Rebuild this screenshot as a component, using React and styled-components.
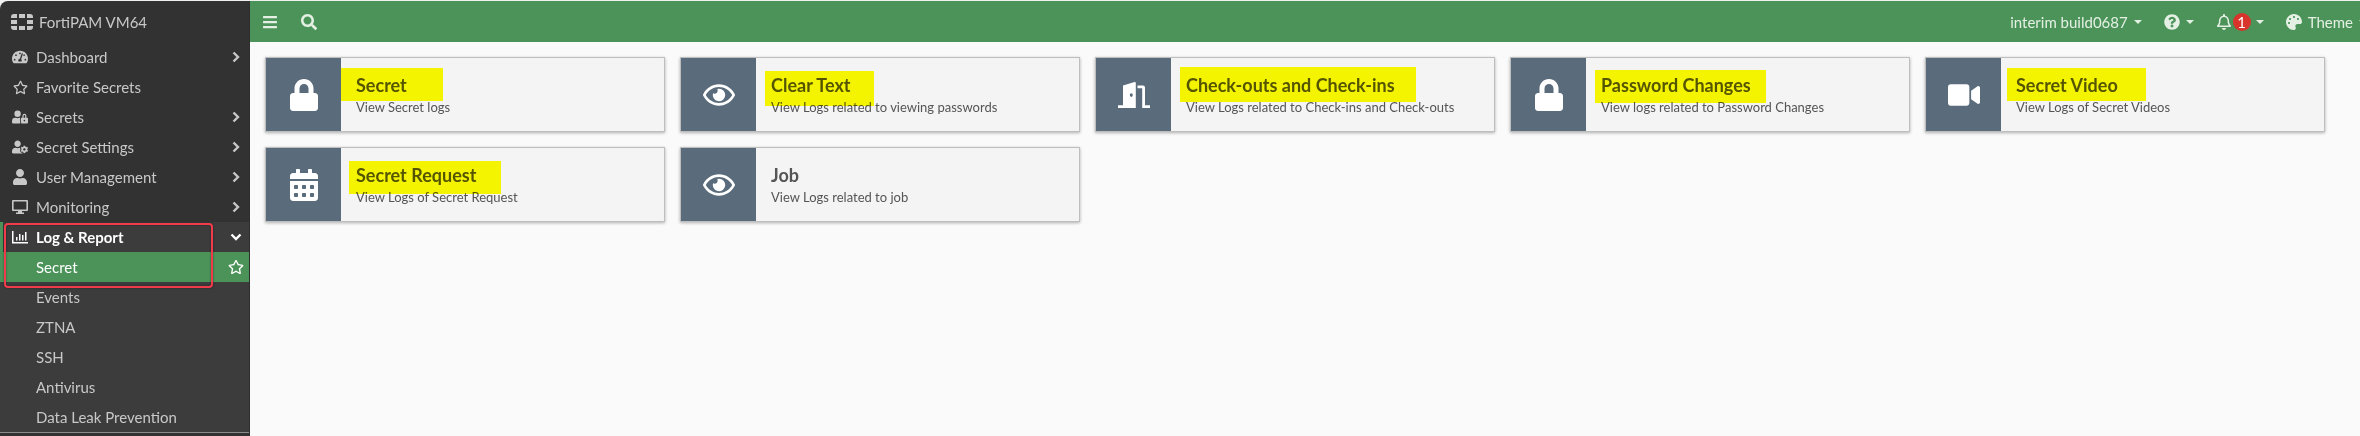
import React from "react";
import styled, { createGlobalStyle, css } from "styled-components";
import {
  FaBars,
  FaSearch,
  FaQuestionCircle,
  FaRegBell,
  FaPalette,
  FaTachometerAlt,
  FaRegStar,
  FaUserLock,
  FaUserCog,
  FaUser,
  FaLock,
  FaRegEye,
  FaVideo,
  FaCalendarAlt,
} from "react-icons/fa";

const color = {
  green: "#4b9359",
  side: "#323232",
  sideOpen: "#3c3c3c",
  sideText: "#c8c8c8",
  headText: "#e4f0e4",
  slate: "#5a6b7b",
  text: "#555555",
};

const GlobalStyle = createGlobalStyle`
  *, *::before, *::after { box-sizing: border-box; }
  body {
    margin: 0;
    background: #f0f2f0;
    font-family: Lato, "Liberation Sans", sans-serif;
    font-size: 15px;
    line-height: 20px;
  }
  button { font: inherit; color: inherit; background: none; border: 0; margin: 0; cursor: pointer; }
  a { color: inherit; text-decoration: none; }
  ul { list-style: none; margin: 0; padding: 0; }
  svg { display: block; flex: none; }
`;

/* Page frame */

const Shell = styled.div`
  display: flex;
  min-height: 100vh;
  padding-top: 1px;
`;

const Sidebar = styled.aside`
  flex: none;
  width: 250px;
  background: ${color.side};
  color: ${color.sideText};
  border-right: 1px solid #2e2e2e;
  border-top-left-radius: 8px;
`;

const Content = styled.div`
  flex: 1;
  min-width: 0;
  display: flex;
  flex-direction: column;
  background: #fafafa;
`;

/* Sidebar */

const Brand = styled.div`
  display: flex;
  align-items: center;
  gap: 6px;
  height: 41px;
  padding: 0 11px;
`;

const entry = css`
  display: flex;
  align-items: center;
  gap: 8px;
  width: 100%;
  height: 30px;
  padding: 0 6px 0 12px;
  text-align: left;
`;

const NavButton = styled.button`
  ${entry}
`;

const NavLink = styled.a`
  ${entry}
`;

const NavIcon = styled.span`
  display: flex;
  justify-content: center;
  width: 16px;
`;

const NavLabel = styled.span`
  flex: 1;
`;

const OpenGroup = styled.li`
  position: relative;
  background: ${color.sideOpen};
  border-bottom: 1px solid #8a8a8a;

  & > ${NavButton} {
    border-left: 3px solid ${color.green};
    padding-left: 9px;
    color: #ffffff;
    font-weight: 700;
  }
`;

const SubItem = styled.li`
  display: flex;
  align-items: center;
  height: 30px;
  padding: 0 5px 0 36px;
  background: ${(p) => (p.$active ? color.green : "transparent")};
  color: ${(p) => (p.$active ? "#ffffff" : "inherit")};

  a { flex: 1; }
`;

const StarButton = styled.button`
  padding: 0;
`;

const Callout = styled.span`
  position: absolute;
  top: 1px;
  left: 4px;
  width: 209px;
  height: 65px;
  border: 2px solid #f03b4b;
  border-radius: 4px;
  box-shadow: 0 0 2px rgba(0, 0, 0, 0.5), inset 0 0 2px rgba(0, 0, 0, 0.5);
  pointer-events: none;
`;

/* Header */

const Header = styled.header`
  display: flex;
  align-items: center;
  justify-content: space-between;
  height: 41px;
  overflow: hidden;
  padding-left: 1px;
  background: ${color.green};
  color: ${color.headText};
`;

const HeaderGroup = styled.div`
  display: flex;
  gap: ${(p) => (p.$bleed ? 0 : 1)}px;
  height: 100%;
  ${(p) => p.$bleed && "margin-right: -18px;"}
`;

const HeaderButton = styled.button`
  display: flex;
  align-items: center;
  gap: ${(p) => p.$gap || 6}px;
  height: 100%;
  padding: 0 11px;
`;

const Badge = styled.span`
  width: 18px;
  height: 18px;
  margin-right: 4px;
  border-radius: 50%;
  background: #d9342b;
  color: #ffffff;
  line-height: 18px;
  text-align: center;
`;

const Caret = styled.span`
  border: solid transparent;
  border-width: 4px 4px 0;
  border-top-color: currentColor;
`;

/* Cards */

const CardGrid = styled.main`
  display: grid;
  grid-template-columns: repeat(auto-fill, 400px);
  gap: 15px;
  padding: 15px;
`;

const Card = styled.a`
  display: flex;
  height: 75px;
  background: #f4f4f4;
  border: 1px solid #bebebe;
  box-shadow: 0 1px 3px rgba(0, 0, 0, 0.3);
  color: ${color.text};
`;

const CardIcon = styled.span`
  display: flex;
  align-items: center;
  justify-content: center;
  width: 75px;
  background: ${color.slate};
  color: #ffffff;
`;

const CardBody = styled.span`
  position: relative;
  flex: 1;
  display: flex;
  flex-direction: column;
  padding: 15px 15px 0;
`;

const CardTitle = styled.strong`
  font-size: 18px;
  font-weight: 700;
  line-height: 24px;
`;

const CardNote = styled.span`
  font-size: 13px;
  line-height: 20px;
`;

const Marker = styled.span`
  position: absolute;
  left: ${(p) => p.$box[0]}px;
  top: ${(p) => p.$box[1]}px;
  width: ${(p) => p.$box[2]}px;
  height: ${(p) => p.$box[3]}px;
  background: #ffff00;
  mix-blend-mode: multiply;
  pointer-events: none;
`;

/* Drawings */

const Logo = () => (
  <svg width="22" height="16" viewBox="0 0 22 16" fill="currentColor" aria-hidden="true">
    <path d="M3 0h3v4H0V3a3 3 0 0 1 3-3zM8 0h6v4H8zM16 0h3a3 3 0 0 1 3 3v1h-6zM0 6h6v4H0zM16 6h6v4h-6zM0 12h6v4H3a3 3 0 0 1-3-3zM8 12h6v4H8zM16 12h6v1a3 3 0 0 1-3 3h-3z" />
  </svg>
);

const Monitor = () => (
  <svg width="16" height="14" viewBox="0 0 16 14" fill="currentColor" aria-hidden="true">
    <path fillRule="evenodd" d="M1 0h14a1 1 0 0 1 1 1v9a1 1 0 0 1-1 1h-5v1.500h2V14H4v-1.500h2V11H1a1 1 0 0 1-1-1V1a1 1 0 0 1 1-1zm.6 1.600v7.800h12.800V1.600z" />
  </svg>
);

const Bars = () => (
  <svg width="16" height="13" viewBox="0 0 16 13" fill="currentColor" aria-hidden="true">
    <path d="M0 0h1.500v11H16v1.500H0zM4 6h1.500v3.500H4zM7 3h1.500v6.500H7zM10 4h1.500v5.500H10zM13 1h1.500v8.500H13z" />
  </svg>
);

const Chevron = ({ down }) => (
  <svg width="14" height="14" viewBox="0 0 14 14" fill="none" stroke="currentColor" strokeWidth="2.400" aria-hidden="true">
    <path d={down ? "M2.500 4.500 7 9l4.500-4.500" : "M4.500 2.500 9 7l-4.500 4.500"} />
  </svg>
);

const Door = () => (
  <svg width="32" height="26" viewBox="0 0 32 26" fill="currentColor" aria-hidden="true">
    <path fillRule="evenodd" d="M5 3.500 16.500.1q1.300-.3 1.300 1V26H0v-2.800h5zM13.300 11.300a1.500 1.800 0 1 0 0 3.600 1.500 1.800 0 0 0 0-3.600z" />
    <path d="M19.500 3.500H25a2 2 0 0 1 2 2v17.700h5V26h-7.800V6.300h-4.700z" />
  </svg>
);

const navItems = [
  { label: "Dashboard", icon: <FaTachometerAlt size={16} />, opens: true },
  { label: "Favorite Secrets", icon: <FaRegStar size={15} /> },
  { label: "Secrets", icon: <FaUserLock size={16} />, opens: true },
  { label: "Secret Settings", icon: <FaUserCog size={16} />, opens: true },
  { label: "User Management", icon: <FaUser size={16} />, opens: true },
  { label: "Monitoring", icon: <Monitor />, opens: true },
];

const reportItems = ["Secret", "Events", "ZTNA", "SSH", "Antivirus", "Data Leak Prevention"];

const cards = [
  { title: "Secret", note: "View Secret logs", icon: <FaLock size={32} />, marker: [0, 10, 102, 33] },
  { title: "Clear Text", note: "View Logs related to viewing passwords", icon: <FaRegEye size={32} />, marker: [9, 13, 109, 35] },
  { title: "Check-outs and Check-ins", note: "View Logs related to Check-ins and Check-outs", icon: <Door />, marker: [9, 9, 236, 35] },
  { title: "Password Changes", note: "View logs related to Password Changes", icon: <FaLock size={32} />, marker: [9, 12, 171, 33] },
  { title: "Secret Video", note: "View Logs of Secret Videos", icon: <FaVideo size={32} />, marker: [6, 10, 139, 33] },
  { title: "Secret Request", note: "View Logs of Secret Request", icon: <FaCalendarAlt size={32} />, marker: [8, 13, 152, 33] },
  { title: "Job", note: "View Logs related to job", icon: <FaRegEye size={32} /> },
];

function NavEntry({ item }) {
  const Row = item.opens ? NavButton : NavLink;
  const rowProps = item.opens ? { type: "button", "aria-expanded": false } : { href: "#favorites" };
  return (
    <li>
      <Row {...rowProps}>
        <NavIcon>{item.icon}</NavIcon>
        <NavLabel>{item.label}</NavLabel>
        {item.opens && <Chevron />}
      </Row>
    </li>
  );
}

export default function App() {
  return (
    <>
      <GlobalStyle />
      <Shell>
        <Sidebar>
          <Brand>
            <Logo />
            <span>FortiPAM VM64</span>
          </Brand>
          <nav aria-label="Main">
            <ul>
              {navItems.map((item) => (
                <NavEntry key={item.label} item={item} />
              ))}
              <OpenGroup>
                <NavButton type="button" aria-expanded="true">
                  <NavIcon><Bars /></NavIcon>
                  <NavLabel>Log &amp; Report</NavLabel>
                  <Chevron down />
                </NavButton>
                <ul>
                  {reportItems.map((name, i) => (
                    <SubItem key={name} $active={i === 0}>
                      <a href={`#${name}`}>{name}</a>
                      {i === 0 && (
                        <StarButton type="button" aria-label="Add to favorites">
                          <FaRegStar size={16} />
                        </StarButton>
                      )}
                    </SubItem>
                  ))}
                </ul>
                <Callout />
              </OpenGroup>
            </ul>
          </nav>
        </Sidebar>
        <Content>
          <Header>
            <HeaderGroup>
              <HeaderButton type="button" aria-label="Toggle menu"><FaBars size={16} /></HeaderButton>
              <HeaderButton type="button" aria-label="Search"><FaSearch size={16} /></HeaderButton>
            </HeaderGroup>
            <HeaderGroup $bleed>
              <HeaderButton type="button">interim build0687<Caret /></HeaderButton>
              <HeaderButton type="button" aria-label="Help"><FaQuestionCircle size={16} /><Caret /></HeaderButton>
              <HeaderButton type="button" aria-label="Notifications" $gap={1}>
                <FaRegBell size={16} />
                <Badge>1</Badge>
                <Caret />
              </HeaderButton>
              <HeaderButton type="button"><FaPalette size={16} />Theme<Caret /></HeaderButton>
            </HeaderGroup>
          </Header>
          <CardGrid>
            {cards.map((card) => (
              <Card key={card.title} href={`#${card.title}`}>
                <CardIcon>{card.icon}</CardIcon>
                <CardBody>
                  <CardTitle>{card.title}</CardTitle>
                  <CardNote>{card.note}</CardNote>
                  {card.marker && <Marker $box={card.marker} />}
                </CardBody>
              </Card>
            ))}
          </CardGrid>
        </Content>
      </Shell>
    </>
  );
}
